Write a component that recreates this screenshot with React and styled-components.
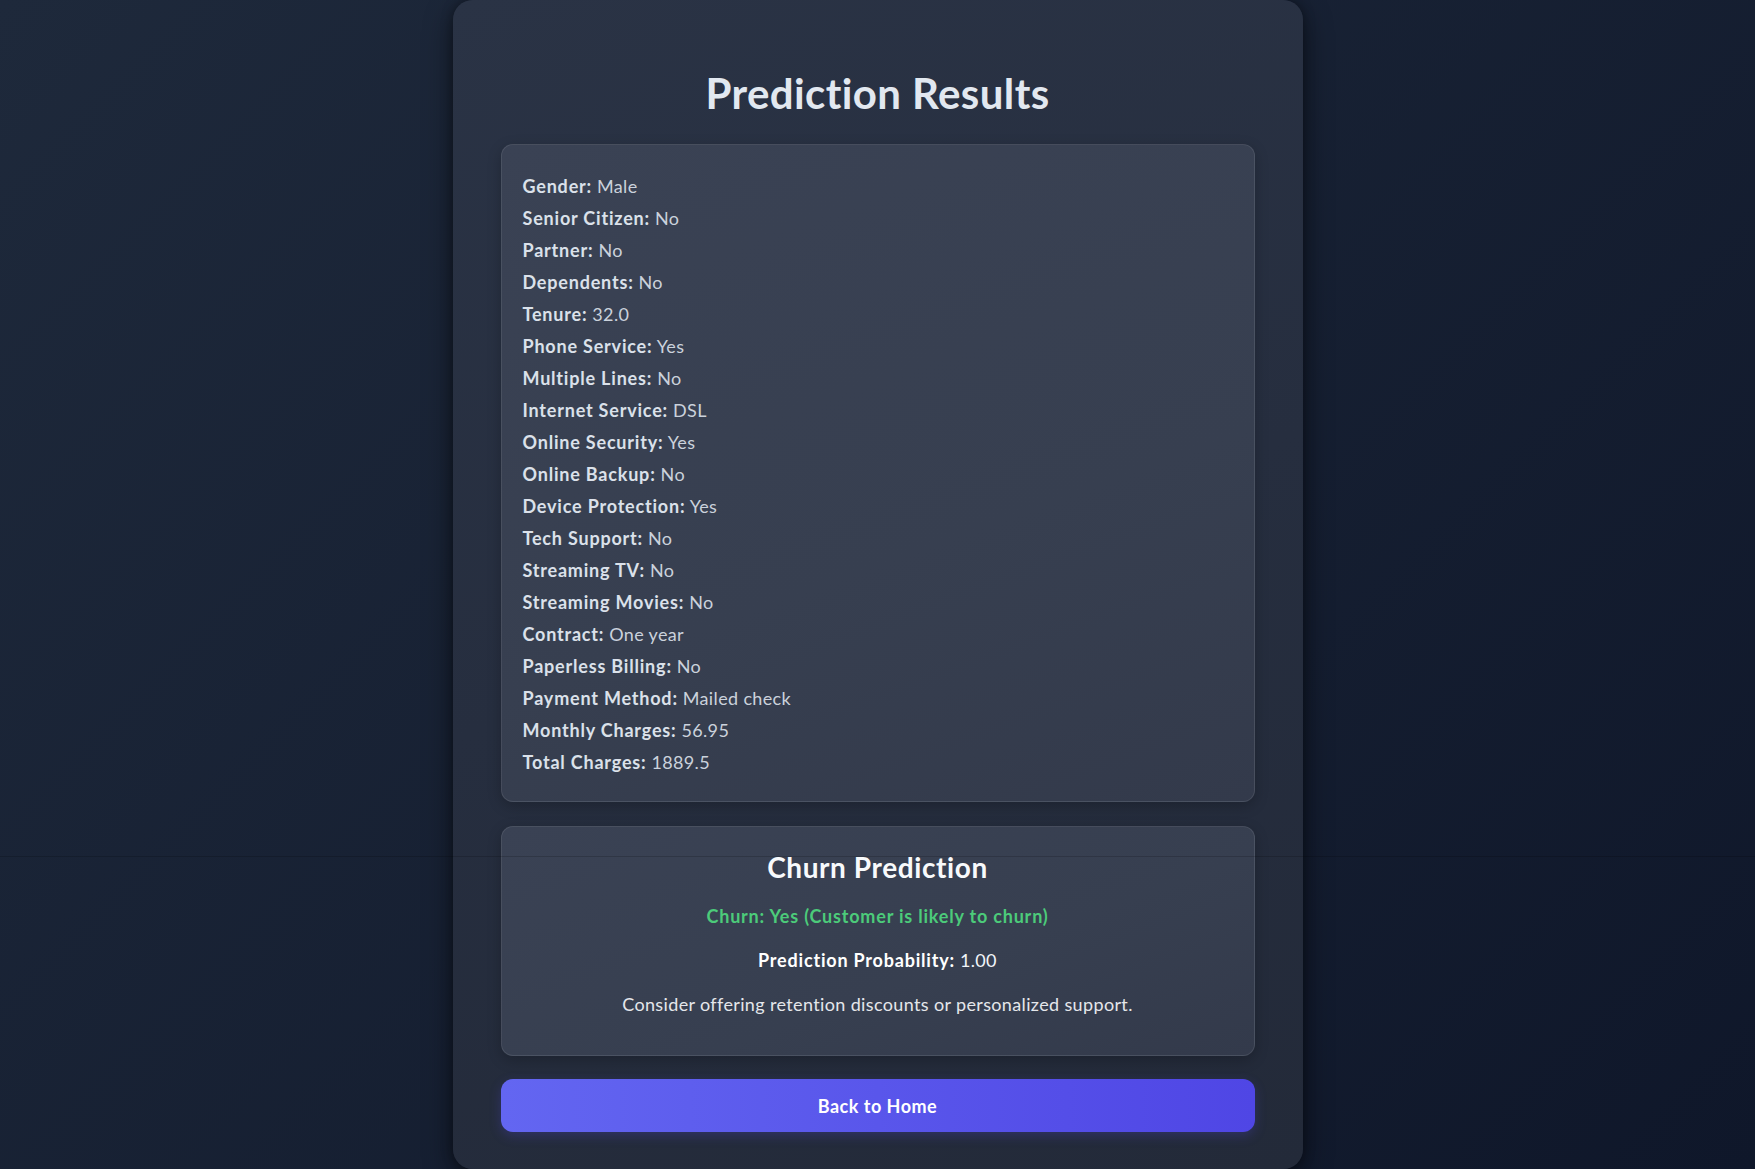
import React from "react";
import styled, { createGlobalStyle } from "styled-components";

const GlobalStyle = createGlobalStyle`
  html, body {
    margin: 0;
    padding: 0;
  }
  body {
    min-height: 100vh;
    background: linear-gradient(135deg, #1e293b 0%, #0f172a 100%);
    font-family: "Lato", "Open Sans", "Noto Sans", sans-serif;
    color: #e2e8f0;
    overflow-x: hidden;
  }
  body::after {
    content: "";
    position: absolute;
    left: 0;
    right: 0;
    top: 856px;
    height: 1px;
    background: rgba(0, 0, 0, 0.16);
    pointer-events: none;
  }
`;

const Page = styled.main`
  display: flex;
  justify-content: center;
  align-items: flex-start;
`;

const Card = styled.section`
  width: 850px;
  box-sizing: border-box;
  padding: 48px 48px 37px;
  border-radius: 20px;
  background: linear-gradient(160deg, #2a3345 0%, #262e3f 50%, #232a39 100%);
  box-shadow: 0 10px 30px rgba(0, 0, 0, 0.45), 0 0 12px rgba(0, 0, 0, 0.35);
  display: flex;
  flex-direction: column;
`;

const Title = styled.h1`
  margin: 21px 0 27px;
  font-size: 42px;
  line-height: 48px;
  font-weight: 700;
  letter-spacing: 0.4px;
  text-align: center;
  color: #e2e8f0;
`;

const Panel = styled.div`
  box-sizing: border-box;
  border-radius: 12px;
  border: 1px solid rgba(255, 255, 255, 0.09);
  background: linear-gradient(160deg, #3a4254 0%, #373f50 60%, #333a4b 100%);
  box-shadow: 0 4px 14px rgba(0, 0, 0, 0.22);
`;

const Details = styled(Panel)`
  padding: 25px 21px 23px;
  display: flex;
  flex-direction: column;
`;

const Row = styled.div`
  font-size: 18px;
  line-height: 32px;
  letter-spacing: 0.35px;
  color: #cbd2dc;
`;

const Label = styled.strong`
  font-weight: 700;
  letter-spacing: 0.8px;
  color: #dbe1ea;
`;

const ChurnBox = styled(Panel)`
  margin-top: 24px;
  padding: 23px 24px 37px;
  display: flex;
  flex-direction: column;
  align-items: center;
  text-align: center;
`;

const ChurnTitle = styled.h2`
  margin: 0 0 18px;
  font-size: 28px;
  line-height: 34px;
  font-weight: 700;
  letter-spacing: 0.6px;
  color: #f8fafc;
`;

const Line = styled.p`
  margin: 0 0 ${(p) => (p.$last ? 0 : 16)}px;
  font-size: 18px;
  line-height: 28px;
  letter-spacing: ${(p) => (p.$bold ? 0.8 : 0.36)}px;
  color: ${(p) => p.$color || "#e5e7eb"};
  font-weight: ${(p) => (p.$bold ? 700 : 400)};
`;

const StrongWhite = styled.strong`
  font-weight: 700;
  letter-spacing: 0.8px;
  color: #ffffff;
`;

const Button = styled.button`
  margin-top: 23px;
  height: 53px;
  width: 100%;
  border: none;
  border-radius: 12px;
  background: linear-gradient(90deg, #6366f1 0%, #4f46e5 100%);
  color: #ffffff;
  font-family: inherit;
  font-size: 18px;
  font-weight: 700;
  letter-spacing: 0.5px;
  cursor: pointer;
  box-shadow: 0 4px 12px rgba(79, 70, 229, 0.25);
`;

const fields = [
  ["Gender", "Male"],
  ["Senior Citizen", "No"],
  ["Partner", "No"],
  ["Dependents", "No"],
  ["Tenure", "32.0"],
  ["Phone Service", "Yes"],
  ["Multiple Lines", "No"],
  ["Internet Service", "DSL"],
  ["Online Security", "Yes"],
  ["Online Backup", "No"],
  ["Device Protection", "Yes"],
  ["Tech Support", "No"],
  ["Streaming TV", "No"],
  ["Streaming Movies", "No"],
  ["Contract", "One year"],
  ["Paperless Billing", "No"],
  ["Payment Method", "Mailed check"],
  ["Monthly Charges", "56.95"],
  ["Total Charges", "1889.5"],
];

export default function App() {
  return (
    <>
      <GlobalStyle />
      <Page>
        <Card>
          <Title>Prediction Results</Title>
          <Details>
            {fields.map(([k, v]) => (
              <Row key={k}>
                <Label>{k}:</Label> {v}
              </Row>
            ))}
          </Details>
          <ChurnBox>
            <ChurnTitle>Churn Prediction</ChurnTitle>
            <Line $bold $color="#4ccb7a">
              Churn: Yes (Customer is likely to churn)
            </Line>
            <Line $color="#f1f5f9">
              <StrongWhite>Prediction Probability:</StrongWhite> 1.00
            </Line>
            <Line $last>Consider offering retention discounts or personalized support.</Line>
          </ChurnBox>
          <Button>Back to Home</Button>
        </Card>
      </Page>
    </>
  );
}
